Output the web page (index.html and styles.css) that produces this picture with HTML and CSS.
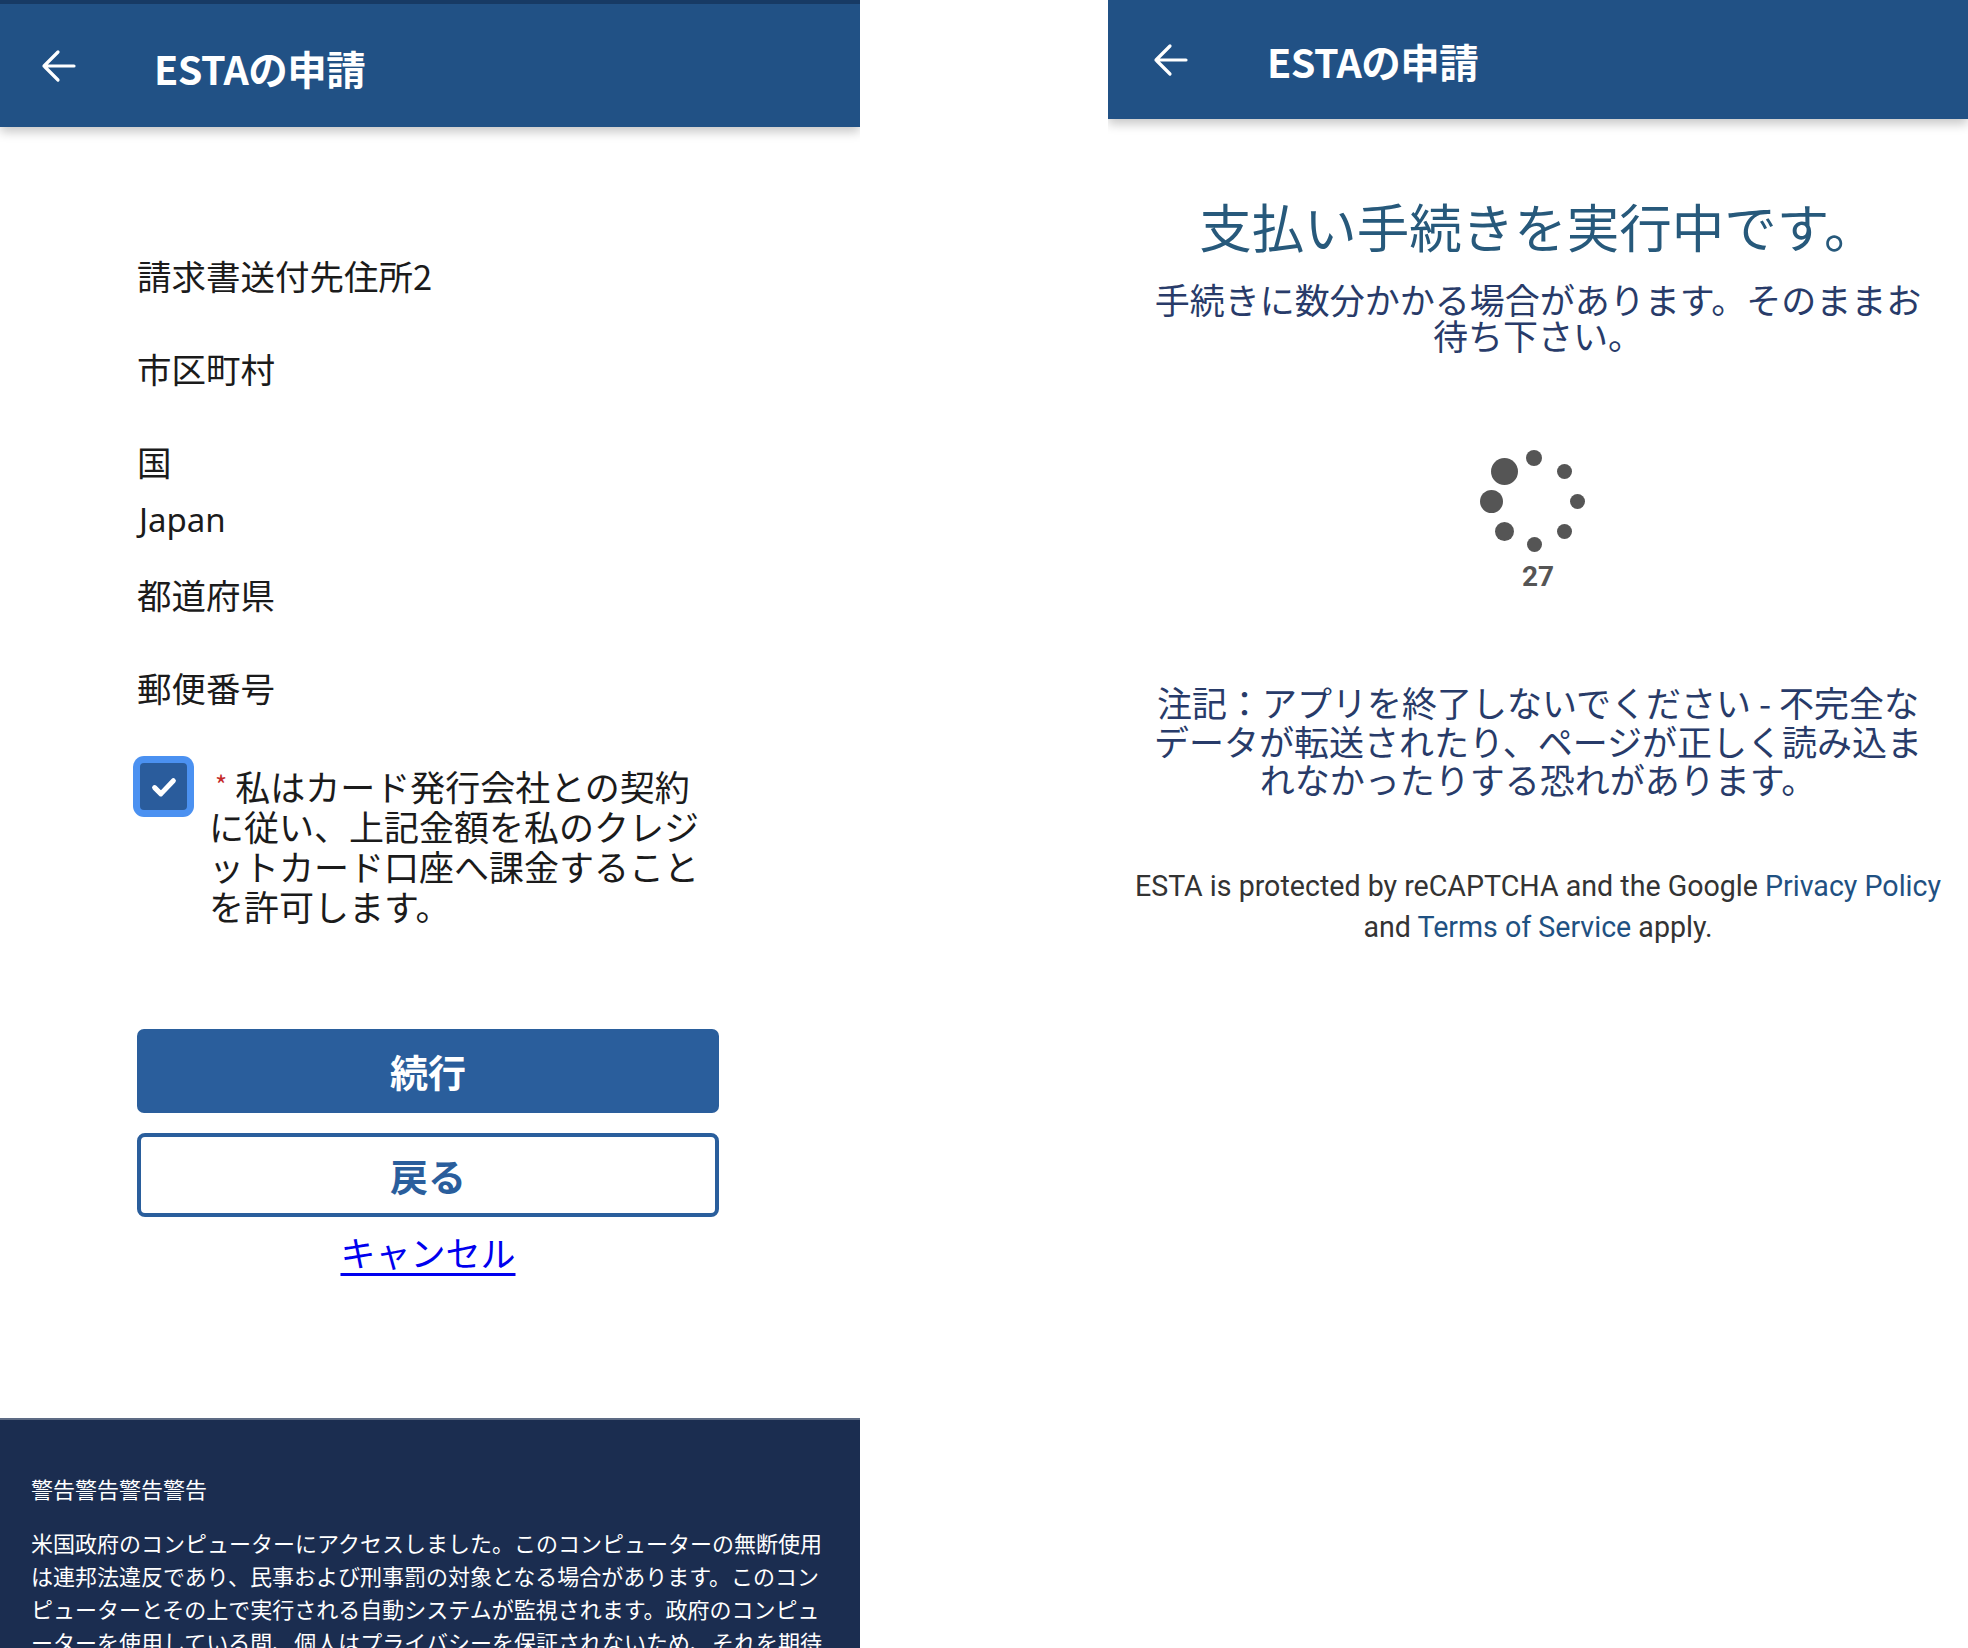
FILE: index.html
```html
<!DOCTYPE html>
<html lang="ja">
<head>
<meta charset="utf-8">
<title>ESTAの申請</title>
<link rel="stylesheet" href="styles.css">
</head>
<body>
<div class="screens">
  <section class="screen screen-left">
    <header class="appbar appbar-left">
      <svg class="back" viewBox="0 0 36 34" width="36" height="34" aria-hidden="true">
        <path d="M34 17H4M18 3L4 17L18 31" fill="none" stroke="#fff" stroke-width="3.2" stroke-linecap="round" stroke-linejoin="round"/>
      </svg>
      <h1 class="appbar-title">ESTAの申請</h1>
    </header>
    <main class="form">
      <div class="field"><div class="field-label">請求書送付先住所2</div></div>
      <div class="field"><div class="field-label">市区町村</div></div>
      <div class="field field-filled"><div class="field-label">国</div><div class="field-value">Japan</div></div>
      <div class="field"><div class="field-label">都道府県</div></div>
      <div class="field"><div class="field-label">郵便番号</div></div>
      <label class="consent">
        <span class="checkbox">
          <span class="checkbox-inner">
            <svg viewBox="0 0 24 24" width="30" height="30" aria-hidden="true"><path d="M4.5 12.5l5 5L19.5 7" fill="none" stroke="#fff" stroke-width="4" stroke-linecap="round" stroke-linejoin="round"/></svg>
          </span>
        </span>
        <span class="consent-text"><span class="req">*</span>私はカード発行会社との契約に従い、上記金額を私のクレジットカード口座へ課金することを許可します。</span>
      </label>
      <button class="btn btn-primary" type="button">続行</button>
      <button class="btn btn-outline" type="button">戻る</button>
      <a class="cancel" href="#">キャンセル</a>
    </main>
    <footer class="warning">
      <p class="warning-title">警告警告警告警告</p>
      <p class="warning-text">米国政府のコンピューターにアクセスしました。このコンピューターの無断使用は連邦法違反であり、民事および刑事罰の対象となる場合があります。このコンピューターとその上で実行される自動システムが監視されます。政府のコンピューターを使用している間、個人はプライバシーを保証されないため、それを期待すべきではありません。</p>
    </footer>
  </section>

  <section class="screen screen-right">
    <header class="appbar appbar-right">
      <svg class="back" viewBox="0 0 36 34" width="36" height="34" aria-hidden="true">
        <path d="M34 17H4M18 3L4 17L18 31" fill="none" stroke="#fff" stroke-width="3.2" stroke-linecap="round" stroke-linejoin="round"/>
      </svg>
      <h1 class="appbar-title">ESTAの申請</h1>
    </header>
    <main class="progress">
      <h2 class="progress-title">支払い手続きを実行中です。</h2>
      <p class="progress-sub">手続きに数分かかる場合があります。そのままお待ち下さい。</p>
      <div class="spinner" aria-hidden="true">
        <span class="dot d1"></span><span class="dot d2"></span><span class="dot d3"></span><span class="dot d4"></span>
        <span class="dot d5"></span><span class="dot d6"></span><span class="dot d7"></span><span class="dot d8"></span>
      </div>
      <div class="counter">27</div>
      <p class="progress-note">注記：アプリを終了しないでください - 不完全なデータが転送されたり、ページが正しく読み込まれなかったりする恐れがあります。</p>
      <p class="recaptcha">ESTA is protected by reCAPTCHA and the Google <a href="#">Privacy Policy</a> and <a href="#">Terms of Service</a> apply.</p>
    </main>
  </section>
</div>
</body>
</html>
```

FILE: styles.css
```css
* { box-sizing: border-box; }

html, body {
  margin: 0;
  padding: 0;
  background: #ffffff;
}

body {
  width: 1968px;
  height: 1648px;
  overflow: hidden;
  font-family: "Noto Sans CJK JP", "Noto Sans", sans-serif;
  color: #1b1b1b;
}

.screens {
  display: flex;
  gap: 248px;
  height: 1648px;
}

.screen {
  width: 860px;
  height: 1648px;
  display: flex;
  flex-direction: column;
  overflow: hidden;
  background: #ffffff;
}

/* ---------- app bar ---------- */
.appbar {
  position: relative;
  z-index: 2;
  display: flex;
  align-items: center;
  background: #215185;
  box-shadow: 0 5px 10px rgba(0, 0, 0, 0.22);
  flex: none;
}

.appbar-left {
  height: 127px;
  border-top: 4px solid #173a64;
  padding-left: 40px;
}

.appbar-right {
  height: 119px;
  padding-left: 44px;
}

.back {
  display: block;
  flex: none;
}

.appbar-title {
  margin: 0;
  color: #ffffff;
  font-family: "Noto Sans CJK JP", sans-serif;
  font-weight: 700;
  font-size: 39.5px;
  line-height: 1;
  letter-spacing: -0.5px;
}

.appbar-left .appbar-title {
  margin-left: 78px;
  margin-top: 4px;
}

.appbar-right .appbar-title {
  margin-left: 79px;
  margin-top: 2px;
}

/* ---------- left form ---------- */
.form {
  flex: 1;
  display: flex;
  flex-direction: column;
  padding: 124px 141px 0 137px;
}

.field {
  margin-bottom: 45px;
}

.field-filled {
  margin-bottom: 26px;
}

.field-label,
.field-value {
  font-size: 34.5px;
  line-height: 48px;
  color: #1b1b1b;
}

.field-value {
  margin-top: 11px;
  padding-left: 2px;
  font-family: "Noto Sans", "Noto Sans CJK JP", sans-serif;
  font-size: 33px;
}

.consent {
  display: flex;
  align-items: flex-start;
  gap: 15px;
  margin-left: -4px;
}

.checkbox {
  flex: none;
  width: 61px;
  height: 61px;
  border-radius: 11px;
  background: #4b91f1;
  padding: 7px;
  display: flex;
}

.checkbox-inner {
  flex: 1;
  border-radius: 4px;
  background: #2a5c9c;
  display: flex;
  align-items: center;
  justify-content: center;
}

.checkbox-inner svg { display: block; }

.consent-text {
  width: 494px;
  margin-top: 8px;
  font-size: 35px;
  line-height: 40px;
  color: #1b1b1b;
}

.req {
  color: #c42a2a;
  font-size: 26px;
  vertical-align: 6px;
  margin-left: 6px;
  margin-right: 8px;
}

.btn {
  display: block;
  width: 582px;
  height: 84px;
  font-family: "Noto Sans CJK JP", sans-serif;
  font-weight: 700;
  font-size: 38px;
  line-height: 1;
  border-radius: 7px;
  cursor: pointer;
}

.btn-primary {
  margin-top: 103px;
  background: #2a5e9c;
  color: #ffffff;
  border: none;
}

.btn-outline {
  margin-top: 20px;
  background: #ffffff;
  color: #2a5e9c;
  border: 4px solid #2a5e9c;
  border-radius: 8px;
}

.cancel {
  align-self: center;
  margin-top: 11px;
  font-size: 35px;
  line-height: 48px;
  color: #0000ee;
  text-decoration: underline;
  text-decoration-thickness: 3px;
  text-underline-offset: 6px;
}

/* ---------- footer warning ---------- */
.warning {
  flex: none;
  height: 230px;
  background: #1b2d50;
  border-top: 2px solid #5d6b84;
  padding: 52px 30px 0 31px;
  color: #ffffff;
  overflow: hidden;
}

.warning-title {
  margin: 0;
  font-size: 22px;
  line-height: 33px;
}

.warning-text {
  margin: 21px 0 0;
  width: 796px;
  font-size: 22px;
  line-height: 33px;
}

/* ---------- right progress ---------- */
.progress {
  flex: 1;
  display: flex;
  flex-direction: column;
  align-items: center;
  text-align: center;
  padding: 76px 0 0;
}

.progress-title {
  margin: 0;
  font-weight: 400;
  font-size: 52.5px;
  line-height: 60px;
  color: #27597b;
}

.progress-sub {
  margin: 26px 0 0;
  width: 774px;
  font-size: 35px;
  line-height: 36px;
  color: #283b69;
}

.spinner {
  position: relative;
  width: 120px;
  height: 120px;
  margin-top: 88px;
  margin-left: -8px;
}

.dot {
  position: absolute;
  border-radius: 50%;
  background: #555555;
}

.d1 { width: 16px; height: 16px; left: 52px; top: 9px; }
.d2 { width: 15px; height: 15px; left: 82.5px; top: 22.5px; }
.d3 { width: 15px; height: 15px; left: 95.5px; top: 52.5px; }
.d4 { width: 15px; height: 15px; left: 82.5px; top: 82.5px; }
.d5 { width: 15px; height: 15px; left: 52.5px; top: 95.5px; }
.d6 { width: 19px; height: 19px; left: 20.5px; top: 80.5px; }
.d7 { width: 23px; height: 23px; left: 5.5px; top: 48.5px; }
.d8 { width: 27px; height: 27px; left: 16.5px; top: 16.5px; }

.counter {
  font-family: Roboto, "Noto Sans", sans-serif;
  font-weight: 700;
  font-size: 28px;
  line-height: 32px;
  color: #555555;
}

.progress-note {
  margin: 90px 0 0;
  width: 774px;
  font-size: 35px;
  line-height: 38.5px;
  color: #283b69;
}

.recaptcha {
  margin: 67px 0 0;
  width: 830px;
  font-family: Roboto, "Noto Sans", sans-serif;
  font-size: 28.6px;
  line-height: 41px;
  color: #333333;
}

.recaptcha a {
  color: #1f5182;
  text-decoration: none;
}
```
